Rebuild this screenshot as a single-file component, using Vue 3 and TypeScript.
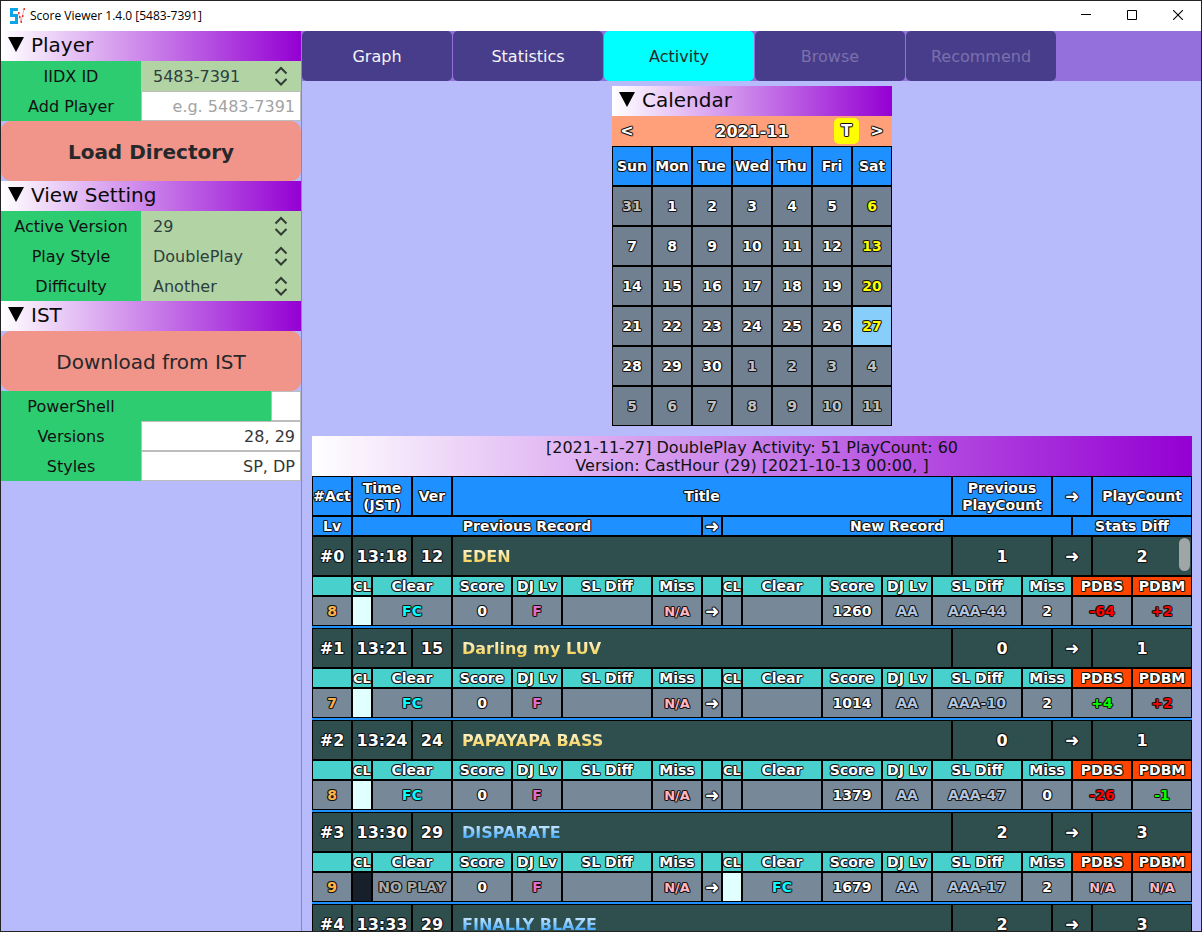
<script setup lang="ts">
import { ref } from 'vue'

interface RecordSide {
  lamp: 'none' | 'fc' | 'noplay'
  clear: string
  score: string
  dj: string
  diff: string
  miss: string
}

interface Details {
  level: string
  prev: RecordSide
  next: RecordSide
  pdbs: string
  pdbsTone: string
  pdbm: string
  pdbmTone: string
}

interface Activity {
  time: string
  ver: string
  title: string
  tone: 'gold' | 'sky'
  before: number
  after: number
  details?: Details
}

const empty: RecordSide = { lamp: 'fc', clear: 'FC', score: '0', dj: 'F', diff: '', miss: 'N/A' }
const fresh: RecordSide = { lamp: 'noplay', clear: 'NO PLAY', score: '0', dj: 'F', diff: '', miss: 'N/A' }

const result = (score: string, diff: string, miss: string, fc = false): RecordSide => ({
  lamp: fc ? 'fc' : 'none',
  clear: fc ? 'FC' : '',
  score,
  dj: 'AA',
  diff,
  miss,
})

const activities: Activity[] = [
  {
    time: '13:18', ver: '12', title: 'EDEN', tone: 'gold', before: 1, after: 2,
    details: { level: '8', prev: empty, next: result('1260', 'AAA-44', '2'), pdbs: '-64', pdbsTone: 'worse', pdbm: '+2', pdbmTone: 'worse' },
  },
  {
    time: '13:21', ver: '15', title: 'Darling my LUV', tone: 'gold', before: 0, after: 1,
    details: { level: '7', prev: empty, next: result('1014', 'AAA-10', '2'), pdbs: '+4', pdbsTone: 'better', pdbm: '+2', pdbmTone: 'worse' },
  },
  {
    time: '13:24', ver: '24', title: 'PAPAYAPA BASS', tone: 'gold', before: 0, after: 1,
    details: { level: '8', prev: empty, next: result('1379', 'AAA-47', '0'), pdbs: '-26', pdbsTone: 'worse', pdbm: '-1', pdbmTone: 'better' },
  },
  {
    time: '13:30', ver: '29', title: 'DISPARATE', tone: 'sky', before: 2, after: 3,
    details: { level: '9', prev: fresh, next: result('1679', 'AAA-17', '2', true), pdbs: 'N/A', pdbsTone: 'na', pdbm: 'N/A', pdbmTone: 'na' },
  },
  { time: '13:33', ver: '29', title: 'FINALLY BLAZE', tone: 'sky', before: 2, after: 3 },
]

const columns = [40, 20, 40, 40, 60, 50, 90, 50, 20, 20, 80, 60, 50, 20, 70, 30, 20, 20, 40, 60]

const weekdays = ['Sun', 'Mon', 'Tue', 'Wed', 'Thu', 'Fri', 'Sat']
const playedDays = [6, 13, 20, 27]
const selectedDay = ref(27)
const weeks = Array.from({ length: 6 }, (_, week) =>
  Array.from({ length: 7 }, (_, day) => {
    const offset = week * 7 + day
    const inMonth = offset >= 1 && offset <= 30
    const label = offset === 0 ? 31 : offset > 30 ? offset - 30 : offset
    return { label, inMonth, played: inMonth && playedDays.includes(offset) }
  }),
)

const tabs = [
  { name: 'Graph', disabled: false },
  { name: 'Statistics', disabled: false },
  { name: 'Activity', disabled: false },
  { name: 'Browse', disabled: true },
  { name: 'Recommend', disabled: true },
]
const activeTab = ref('Activity')

const viewSettings = [
  { id: 'version', label: 'Active Version', value: '29' },
  { id: 'style', label: 'Play Style', value: 'DoublePlay' },
  { id: 'difficulty', label: 'Difficulty', value: 'Another' },
]
const versions = ref('28, 29')
const styles = ref('SP, DP')
const newPlayer = ref('')
const powerShell = ref(false)
</script>

<template>
  <div class="window">
    <header class="titlebar">
      <svg class="logo" width="16" height="16" viewBox="0 0 16 16" aria-hidden="true">
        <path d="M1 0H9V3H4V6H9V16H1V13H6V9H1Z" fill="#0aa5e8" />
        <path d="M9.500 5L12 14L15 1" fill="none" stroke="#f3a5a5" stroke-width="1" />
        <path d="M9 4h1.500v2h-1.500zM10 8h1.500v2h-1.500zM11.500 13h1.500v2h-1.500zM13 7h1.500v2h-1.500zM14.500 0h1.500v2h-1.500z" fill="#e33" />
      </svg>
      <span class="window-title">Score Viewer 1.4.0 [5483-7391]</span>
      <div class="window-buttons">
        <button type="button" aria-label="Minimize">
          <svg width="10" height="10" viewBox="0 0 10 10"><path d="M0 4.500H10" stroke="#000" /></svg>
        </button>
        <button type="button" aria-label="Maximize">
          <svg width="10" height="10" viewBox="0 0 10 10"><path d="M.5 .5H9.500V9.500H.5Z" fill="none" stroke="#000" /></svg>
        </button>
        <button type="button" aria-label="Close">
          <svg width="10" height="10" viewBox="0 0 10 10"><path d="M0 0L10 10M10 0L0 10" stroke="#000" stroke-width="1.100" /></svg>
        </button>
      </div>
    </header>

    <div class="body">
      <aside class="sidebar">
        <button type="button" class="fold"><svg width="16" height="15" viewBox="0 0 16 15"><path d="M0 0H16L8 15Z" /></svg>Player</button>
        <div class="field">
          <label for="iidx">IIDX ID</label>
          <div class="combo">
            <select id="iidx"><option>5483-7391</option></select>
            <svg width="14" height="20" viewBox="0 0 14 20"><path d="M1.500 7.500L7 2L12.500 7.500M1.500 13L7 18.500L12.500 13" /></svg>
          </div>
        </div>
        <div class="field">
          <label for="add">Add Player</label>
          <input id="add" v-model="newPlayer" type="text" placeholder="e.g. 5483-7391" />
        </div>
        <button type="button" class="action strong">Load Directory</button>

        <button type="button" class="fold"><svg width="16" height="15" viewBox="0 0 16 15"><path d="M0 0H16L8 15Z" /></svg>View Setting</button>
        <div v-for="item in viewSettings" :key="item.id" class="field">
          <label :for="item.id">{{ item.label }}</label>
          <div class="combo">
            <select :id="item.id"><option>{{ item.value }}</option></select>
            <svg width="14" height="20" viewBox="0 0 14 20"><path d="M1.500 7.500L7 2L12.500 7.500M1.500 13L7 18.500L12.500 13" /></svg>
          </div>
        </div>

        <button type="button" class="fold"><svg width="16" height="15" viewBox="0 0 16 15"><path d="M0 0H16L8 15Z" /></svg>IST</button>
        <button type="button" class="action">Download from IST</button>
        <div class="field check">
          <label for="ps">PowerShell</label>
          <input id="ps" v-model="powerShell" type="checkbox" />
        </div>
        <div class="field">
          <label for="versions">Versions</label>
          <input id="versions" v-model="versions" type="text" />
        </div>
        <div class="field">
          <label for="styles">Styles</label>
          <input id="styles" v-model="styles" type="text" />
        </div>
      </aside>

      <main class="main">
        <nav class="tabs">
          <button
            v-for="tab in tabs"
            :key="tab.name"
            type="button"
            :disabled="tab.disabled"
            :class="{ active: tab.name === activeTab }"
            @click="activeTab = tab.name"
          >{{ tab.name }}</button>
        </nav>

        <div class="content">
          <section class="calendar">
            <button type="button" class="fold"><svg width="16" height="15" viewBox="0 0 16 15"><path d="M0 0H16L8 15Z" /></svg>Calendar</button>
            <div class="month outlined">
              <button type="button" aria-label="Previous month">&lt;</button>
              <span class="month-name">2021-11</span>
              <button type="button" class="today" aria-label="Today">T</button>
              <button type="button" aria-label="Next month">&gt;</button>
            </div>
            <table class="days outlined">
              <thead>
                <tr><th v-for="day in weekdays" :key="day">{{ day }}</th></tr>
              </thead>
              <tbody>
                <tr v-for="(week, w) in weeks" :key="w">
                  <td
                    v-for="(day, d) in week"
                    :key="d"
                    :class="{ outside: !day.inMonth, played: day.played, selected: day.inMonth && day.label === selectedDay }"
                    @click="day.inMonth && (selectedDay = day.label)"
                  >{{ day.label }}</td>
                </tr>
              </tbody>
            </table>
          </section>

          <section class="activity">
            <div class="summary">
              <div>[2021-11-27] DoublePlay Activity: 51 PlayCount: 60</div>
              <div>Version: CastHour (29) [2021-10-13 00:00, ]</div>
            </div>
            <div class="records-area">
              <table class="records outlined">
                <colgroup>
                  <col v-for="(width, i) in columns" :key="i" :style="{ width: width + 'px' }" />
                </colgroup>
                <thead>
                  <tr class="tall">
                    <th>#Act</th>
                    <th colspan="2">Time<br />(JST)</th>
                    <th>Ver</th>
                    <th colspan="10">Title</th>
                    <th colspan="2">Previous<br />PlayCount</th>
                    <th colspan="2" class="arrow">➜</th>
                    <th colspan="2">PlayCount</th>
                  </tr>
                  <tr class="short">
                    <th>Lv</th>
                    <th colspan="7">Previous Record</th>
                    <th class="arrow">➜</th>
                    <th colspan="8">New Record</th>
                    <th colspan="3">Stats Diff</th>
                  </tr>
                </thead>
                <tbody v-for="(a, i) in activities" :key="i">
                  <tr class="tall song">
                    <td>#{{ i }}</td>
                    <td colspan="2">{{ a.time }}</td>
                    <td>{{ a.ver }}</td>
                    <td colspan="10" class="title"><span :class="a.tone">{{ a.title }}</span></td>
                    <td colspan="2">{{ a.before }}</td>
                    <td colspan="2" class="arrow">➜</td>
                    <td colspan="2">{{ a.after }}</td>
                  </tr>
                  <template v-if="a.details">
                    <tr class="short names">
                      <td></td>
                      <td class="lamp-name">CL</td>
                      <td colspan="2">Clear</td>
                      <td>Score</td>
                      <td>DJ Lv</td>
                      <td>SL Diff</td>
                      <td>Miss</td>
                      <td></td>
                      <td class="lamp-name">CL</td>
                      <td>Clear</td>
                      <td>Score</td>
                      <td>DJ Lv</td>
                      <td colspan="2">SL Diff</td>
                      <td colspan="2">Miss</td>
                      <td colspan="2" class="stat">PDBS</td>
                      <td class="stat">PDBM</td>
                    </tr>
                    <tr class="values">
                      <td class="level">{{ a.details.level }}</td>
                      <td :class="'lamp-' + a.details.prev.lamp"></td>
                      <td colspan="2" :class="'clear-' + a.details.prev.lamp">{{ a.details.prev.clear }}</td>
                      <td>{{ a.details.prev.score }}</td>
                      <td class="rank-f">{{ a.details.prev.dj }}</td>
                      <td>{{ a.details.prev.diff }}</td>
                      <td class="na">{{ a.details.prev.miss }}</td>
                      <td class="arrow">➜</td>
                      <td :class="'lamp-' + a.details.next.lamp"></td>
                      <td :class="'clear-' + a.details.next.lamp">{{ a.details.next.clear }}</td>
                      <td>{{ a.details.next.score }}</td>
                      <td class="rank-aa">{{ a.details.next.dj }}</td>
                      <td colspan="2" class="rank-aa">{{ a.details.next.diff }}</td>
                      <td colspan="2">{{ a.details.next.miss }}</td>
                      <td colspan="2" :class="a.details.pdbsTone">{{ a.details.pdbs }}</td>
                      <td :class="a.details.pdbmTone">{{ a.details.pdbm }}</td>
                    </tr>
                  </template>
                  <tr class="divider"><td colspan="20"></td></tr>
                </tbody>
              </table>
              <div class="thumb"></div>
            </div>
          </section>
        </div>
      </main>
    </div>
  </div>
</template>

<style>
body {
  margin: 0;
  overflow: hidden;
}
</style>

<style scoped>
* {
  box-sizing: border-box;
}

.window {
  display: flex;
  flex-direction: column;
  height: 100vh;
  border: 1px solid #242424;
  background: #b7bbfb;
  color: #111;
  font: 16px/18px "DejaVu Sans", Verdana, sans-serif;
  overflow: hidden;
}

button,
input,
select {
  margin: 0;
  padding: 0;
  border: 0;
  border-radius: 0;
  background: none;
  color: inherit;
  font: inherit;
}

.titlebar {
  display: flex;
  flex: none;
  align-items: center;
  height: 30px;
  padding-left: 8px;
  background: #fff;
  color: #000;
  font: 12px/16px "Open Sans", "Noto Sans", sans-serif;
}

.window-title {
  margin-left: 5px;
}

.window-buttons {
  display: flex;
  height: 100%;
  margin-left: auto;
}

.window-buttons button {
  display: flex;
  align-items: center;
  justify-content: center;
  width: 46px;
  padding-bottom: 2px;
}

.body {
  display: flex;
  flex: 1;
  min-height: 0;
}

.sidebar {
  flex: none;
  width: 301px;
  border-right: 1px solid #8a8a9c;
}

.fold {
  display: flex;
  align-items: center;
  gap: 7px;
  width: 100%;
  height: 30px;
  padding: 0 0 3px 7px;
  background: linear-gradient(to right, #fff, #9400d3);
  color: #0a0a0a;
  font-size: 20px;
  line-height: 24px;
}

.fold svg {
  flex: none;
}

.field {
  display: flex;
  height: 30px;
  background: #2ecc71;
}

.field label {
  flex: none;
  width: 140px;
  padding-top: 2px;
  line-height: 28px;
  text-align: center;
}

.field input {
  flex: 1;
  min-width: 0;
  padding: 2px 5px 0;
  border: 1px solid #bdbdbd;
  background: #fff;
  color: #353637;
  text-align: right;
}

.field input::placeholder {
  color: #a3a3a3;
  opacity: 1;
}

.check input {
  flex: none;
  width: 30px;
  margin-left: auto;
  appearance: none;
}

.combo {
  position: relative;
  flex: 1;
  background: #b2d3a3;
}

.combo select {
  width: 100%;
  height: 100%;
  padding: 2px 0 0 12px;
  appearance: none;
  color: #2c3e40;
}

.combo svg {
  position: absolute;
  top: 5px;
  right: 13px;
  fill: none;
  stroke: #333b36;
  stroke-width: 2;
  pointer-events: none;
}

.action {
  display: block;
  width: 100%;
  height: 60px;
  padding-top: 2px;
  border-radius: 10px;
  background: #f1948a;
  color: #26282a;
  font-size: 20px;
}

.strong {
  font-weight: bold;
}

.main {
  display: flex;
  flex: 1;
  flex-direction: column;
  min-width: 0;
}

.tabs {
  display: flex;
  flex: none;
  gap: 1px;
  height: 50px;
  background: #9370db;
}

.tabs button {
  width: 150px;
  padding-top: 2px;
  border-radius: 5px;
  background: #483d8b;
  color: #f4f4f4;
}

.tabs .active {
  background: #0ff;
  color: #26282a;
}

.tabs button:disabled {
  color: #7a70ac;
}

.content {
  display: flex;
  flex: 1;
  flex-direction: column;
  gap: 10px;
  min-height: 0;
  padding: 5px 9px 0 10px;
}

.outlined {
  color: #fff;
  font-weight: bold;
  text-shadow: -1px 0 #111, 1px 0 #111, 0 -1px #111, 0 1px #111, 1px 1px #1118, -1px 1px #1118, 1px -1px #1118, -1px -1px #1118;
}

.calendar {
  flex: none;
  align-self: center;
  width: 280px;
}

.month {
  display: grid;
  grid-template-columns: 30px 30px 1fr 30px 30px;
  align-items: center;
  height: 30px;
  background: #ffa07a;
}

.month button {
  height: 26px;
  text-shadow: inherit;
}

.month-name {
  grid-column: 3;
  padding-top: 1px;
  text-align: center;
}

.month .today {
  width: 25px;
  margin: 0 2px;
  border-radius: 5px;
  background: #ff0;
}

table {
  width: 100%;
  border-spacing: 0;
  table-layout: fixed;
  font-size: 14px;
  line-height: 17px;
}

th,
td {
  padding: 0;
  border: 1px solid #000;
  text-align: center;
  white-space: nowrap;
}

th {
  background: #1e90ff;
}

.days tr {
  height: 40px;
}

.days th,
.days td {
  padding-top: 1px;
}

.days td {
  background: #708090;
}

.days .outside {
  color: #c0c0c0;
}

.days .played {
  color: #ff0;
}

.days .selected {
  background: #87cefa;
}

.activity {
  display: flex;
  flex: 1;
  flex-direction: column;
  min-height: 0;
}

.summary {
  flex: none;
  padding: 3px 0 1px;
  background: linear-gradient(to right, #fff, #9400d3);
  text-align: center;
}

.records-area {
  position: relative;
  flex: 1;
  min-height: 0;
  overflow: hidden;
}

.records {
  background: #1e90ff;
}

.tall {
  height: 40px;
}

.tall th {
  padding-top: 1px;
}

.short {
  height: 20px;
}

.song td {
  background: #2f4f4f;
  font-size: 16px;
}

.records .arrow {
  font-size: 17px;
}

.song .title {
  padding-left: 9px;
  text-align: left;
  text-shadow: none;
}

.title span {
  background: linear-gradient(#fffbe0, #f5c83c);
  background-clip: text;
  color: transparent;
}

.title .sky {
  background: linear-gradient(#e0f2ff, #1e9bff);
  background-clip: text;
}

.names td {
  background: #48d1cc;
}

.names .lamp-name {
  font-size: 13px;
}

.names .stat {
  background: #ff4500;
}

.values {
  height: 30px;
}

.values td {
  background: #778899;
}

.values .level {
  color: #ffb347;
}

.values .lamp-fc {
  background: #e0ffff;
}

.values .lamp-noplay {
  background: #17202a;
}

.values .clear-fc {
  color: #0ff;
}

.values .clear-noplay {
  color: #a9a9a9;
}

.values .rank-f {
  color: #da70d6;
}

.values .rank-aa {
  color: #b0c4de;
}

.values .na {
  color: #ffb6c1;
  font-size: 13px;
}

.values .worse {
  color: #f00;
}

.values .better {
  color: #0f0;
}

.records .divider td {
  height: 2px;
  border: 0;
}

.thumb {
  position: absolute;
  top: 62px;
  right: 2px;
  width: 11px;
  height: 33px;
  border-radius: 6px;
  background: #a0a5a5;
}
</style>
